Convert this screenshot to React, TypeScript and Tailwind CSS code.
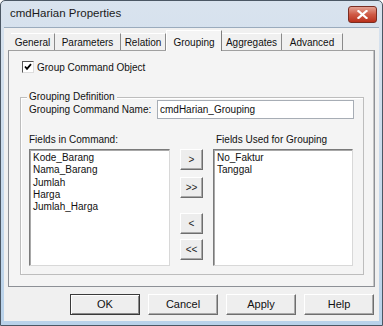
import React from "react";

const tabs = [
  { label: "General", w: "w-[44px]" },
  { label: "Parameters", w: "w-[66px]" },
  { label: "Relation", w: "w-[45px]" },
  { label: "Grouping", w: "w-[56px]", active: true },
  { label: "Aggregates", w: "w-[60px]" },
  { label: "Advanced", w: "w-[61px]" },
];

function SmallBtn({ children, className = "" }: { children: React.ReactNode; className?: string }) {
  return (
    <div
      className={
        "w-[23px] h-[21px] flex items-center justify-center bg-[#ededed] border border-t-[#ffffff] border-l-[#ffffff] border-r-[#6e6e6e] border-b-[#6e6e6e] shadow-[inset_-1px_-1px_0_#a9a9a9] text-[10px] leading-none text-[#222] " +
        className
      }
    >
      {children}
    </div>
  );
}

function DlgBtn({ children, def = false }: { children: React.ReactNode; def?: boolean }) {
  return (
    <div
      className={
        "w-[70px] h-[21px] flex items-center justify-center bg-[#eeeeee] text-[11px] text-[#111] border " +
        (def
          ? "border-[#3a3a3a] shadow-[inset_1px_1px_0_#ffffff,inset_-1px_-1px_0_#8a8a8a]"
          : "border-t-[#ffffff] border-l-[#ffffff] border-r-[#6e6e6e] border-b-[#6e6e6e] shadow-[inset_-1px_-1px_0_#a9a9a9]")
      }
    >
      {children}
    </div>
  );
}

function ListBox({ items, className = "" }: { items: string[]; className?: string }) {
  return (
    <div
      className={
        "h-[117px] bg-white border border-t-[#7a7a7a] border-l-[#7a7a7a] border-r-[#d8d8d8] border-b-[#d8d8d8] shadow-[inset_1px_1px_0_#a8a8a8] pl-[3px] pt-[2px] flex flex-col " +
        className
      }
    >
      {items.map((it) => (
        <div key={it} className="h-[12.3px] leading-[12px] text-[10px] text-[#111]">
          {it}
        </div>
      ))}
    </div>
  );
}

export default function App() {
  return (
    <div className="w-[383px] h-[326px] flex flex-col border border-[#4b5764] rounded-t-[5px] bg-gradient-to-b from-[#d9e3ee] to-[#b9d2ea] font-['Liberation_Sans',Arial,sans-serif] overflow-hidden">
      {/* Title bar */}
      <div className="h-[26px] flex items-center justify-between pl-[9px] pr-[5px]">
        <span className="text-[11.5px] text-[#1b1b1b]">cmdHarian Properties</span>
        <div className="w-[29px] h-[17px] mt-[1px] rounded-[3px] border border-[#7a2d22] bg-gradient-to-b from-[#e3a193] via-[#cf5a45] to-[#b9301c] flex items-center justify-center">
          <svg width="11" height="9" viewBox="0 0 11 9">
            <path d="M1.5 1 L9.5 8 M9.5 1 L1.5 8" stroke="#ffffff" strokeWidth="2.2" strokeLinecap="square" />
          </svg>
        </div>
      </div>

      {/* Body */}
      <div className="flex-1 mx-[3px] mb-[4px] bg-[#f0f0f0] border-t border-[#9aabbd] flex flex-col pl-[4px] pr-[4px] pt-[2px]">
        {/* Tabs */}
        <div className="h-[20px] flex items-end pl-[3px] relative z-10">
          {tabs.map((t) =>
            t.active ? (
              <div
                key={t.label}
                className={
                  t.w +
                  " h-[21px] -mb-[1px] bg-[#f4f4f4] border border-b-0 border-t-[#ffffff] border-l-[#ffffff] border-r-[#7e7e7e] flex items-start pt-[4px] justify-center text-[10px] text-[#111]"
                }
              >
                {t.label}
              </div>
            ) : (
              <div
                key={t.label}
                className={
                  t.w +
                  " h-[17px] bg-[#f0f0f0] border-t border-t-[#ffffff] border-r border-r-[#8a8a8a] flex items-center justify-center text-[10px] text-[#111]"
                }
              >
                {t.label}
              </div>
            )
          )}
        </div>

        {/* Panel */}
        <div className="h-[237px] bg-[#f4f4f4] border border-[#8d9096] border-t-[#a0a0a0] shadow-[inset_-1px_0_0_#c4c4c4] flex flex-col">
          {/* Checkbox row */}
          <div className="flex items-center pt-[10px] pl-[13px] h-[22px]">
            <div className="w-[12px] h-[12px] bg-white border border-t-[#555] border-l-[#555] border-r-[#ddd] border-b-[#ddd] flex items-center justify-center">
              <svg width="8" height="8" viewBox="0 0 8 8">
                <path d="M1 3.5 L3 5.8 L7 1.2" stroke="#000" strokeWidth="1.8" fill="none" />
              </svg>
            </div>
            <span className="ml-[3px] text-[10px] text-[#111]">Group Command Object</span>
          </div>

          {/* Group box */}
          <div className="relative mt-[24px] ml-[11px] mr-[10px] border border-[#bdbdbd] shadow-[inset_1px_1px_0_#ffffff] pt-[2px] pb-[8px]">
            <span className="absolute left-[6px] -top-[7px] px-[2px] bg-[#f4f4f4] text-[10px] leading-[12px] text-[#111]">
              Grouping Definition
            </span>
            <div className="flex items-center h-[19px] pl-[8px] pr-[9px]">
              <span className="w-[128px] text-[10px] text-[#111]">Grouping Command Name:</span>
              <div className="flex-1 h-[19px] bg-white border border-[#a7adb5] flex items-center pl-[2px] text-[10px] text-[#111]">
                cmdHarian_Grouping
              </div>
            </div>
            <div className="flex h-[14px] mt-[13px] pl-[8px] items-center">
              <span className="w-[184px] text-[10px] text-[#111]">Fields in Command:</span>
              <span className="ml-[3px] text-[10px] text-[#111]">Fields Used for Grouping</span>
            </div>
            <div className="flex mt-[3px] pl-[8px]">
              <ListBox className="w-[141px]" items={["Kode_Barang", "Nama_Barang", "Jumlah", "Harga", "Jumlah_Harga"]} />
              <div className="ml-[10px] flex flex-col">
                <SmallBtn>&gt;</SmallBtn>
                <SmallBtn className="mt-[7px]">&gt;&gt;</SmallBtn>
                <SmallBtn className="mt-[15px]">&lt;</SmallBtn>
                <SmallBtn className="mt-[5px]">&lt;&lt;</SmallBtn>
              </div>
              <ListBox className="ml-[10px] w-[140px]" items={["No_Faktur", "Tanggal"]} />
            </div>
          </div>
        </div>

        {/* Buttons */}
        <div className="flex justify-end gap-[8px] mt-[7px] pr-[1px]">
          <DlgBtn def>OK</DlgBtn>
          <DlgBtn>Cancel</DlgBtn>
          <DlgBtn>Apply</DlgBtn>
          <DlgBtn>Help</DlgBtn>
        </div>
      </div>
    </div>
  );
}
